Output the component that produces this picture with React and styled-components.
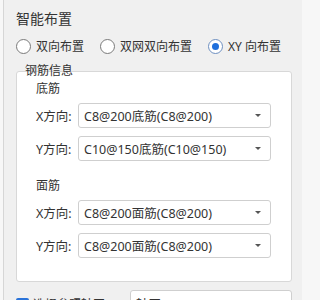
import React from 'react';
import styled, { createGlobalStyle } from 'styled-components';

const Global = createGlobalStyle`
    html, body {
        margin: 0;
        padding: 0;
        background: #f7f7f7;
    }
    body {
        font-family: "Noto Sans", "Noto Sans CJK SC", sans-serif;
        color: #333;
    }
`;

const Page = styled.div`
    width: 302px;
    height: 300px;
    overflow: hidden;
    padding-left: 3px;
    box-sizing: border-box;
`;
const Panel = styled.div`
    height: 100%;
    border-left: 1px solid #d6d6d6;
    background: #f0f0f0;
    padding: 8px 10px 0 12px;
    box-sizing: border-box;
`;
const Title = styled.div`
    font-size: 14px;
    line-height: 20px;
    font-family: "Noto Sans CJK SC", sans-serif;
`;
const RadioRow = styled.div`
    display: flex;
    align-items: center;
    gap: 16px;
    margin-top: 8px;
    height: 20px;
    white-space: nowrap;
`;
const RadioItem = styled.label`
    display: flex;
    align-items: center;
    flex-shrink: 0;
    gap: 5px;
    font-size: 12px;
`;
const Circle = styled.span`
    width: 13px;
    height: 13px;
    flex-shrink: 0;
    border-radius: 50%;
    border: 1px solid ${(props) => props.checked ? '#6d8fc0' : '#7a7a7a'};
    background: #fff;
    display: flex;
    align-items: center;
    justify-content: center;
    &::after {
        content: '';
        width: 7px;
        height: 7px;
        border-radius: 50%;
        background: ${(props) => props.checked ? '#1f6fdc' : 'transparent'};
    }
`;
const Group = styled.div`
    position: relative;
    margin-top: 15px;
    background: #fff;
    border: 1px solid #d8d8d8;
    border-radius: 3px;
    padding: 8px 20px 23px 19px;
    width: 276px;
    box-sizing: border-box;
`;
const Legend = styled.span`
    position: absolute;
    top: -10px;
    left: 8px;
    font-size: 12px;
    line-height: 18px;
`;
const SubTitle = styled.div`
    font-size: 12px;
    line-height: 18px;
    margin-top: ${(props) => props.gap || 0}px;
    margin-bottom: 5px;
`;
const Field = styled.div`
    display: grid;
    grid-template-columns: 42px 193px;
    align-items: center;
    margin-bottom: ${(props) => props.last ? 0 : 8}px;
    white-space: nowrap;
`;
const FieldLabel = styled.span`
    font-size: 12.5px;
`;
const Select = styled.div`
    height: 25px;
    box-sizing: border-box;
    border: 1px solid #cfcfcf;
    border-radius: 3px;
    background: #fff;
    display: flex;
    align-items: center;
    justify-content: space-between;
    padding: 0 9px 0 5px;
    font-size: 12.5px;
`;
const Caret = styled.span`
    width: 0;
    height: 0;
    border-left: 3px solid transparent;
    border-right: 3px solid transparent;
    border-top: 3px solid #555;
`;
const Bottom = styled.div`
    display: flex;
    align-items: flex-start;
    margin-top: 8px;
    white-space: nowrap;
`;
const CheckItem = styled.label`
    display: flex;
    align-items: center;
    gap: 4px;
    width: 114px;
    margin-top: 5px;
    font-size: 12px;
`;
const Check = styled.span`
    width: 13px;
    height: 13px;
    border-radius: 2px;
    background: #2a73d9;
    color: #fff;
    font-size: 10px;
    line-height: 13px;
    text-align: center;
`;
const Input = styled.div`
    width: 162px;
    height: 25px;
    box-sizing: border-box;
    border: 1px solid #cfcfcf;
    border-radius: 3px;
    background: #fff;
    padding: 3px 5px;
    font-size: 12.5px;
`;

const rows = [
    { title: '底筋', x: 'C8@200底筋(C8@200)', y: 'C10@150底筋(C10@150)' },
    { title: '面筋', x: 'C8@200面筋(C8@200)', y: 'C8@200面筋(C8@200)' },
];

const App = () => (
    <Page>
        <Global />
        <Panel>
            <Title>智能布置</Title>
            <RadioRow>
                <RadioItem><Circle />双向布置</RadioItem>
                <RadioItem><Circle />双网双向布置</RadioItem>
                <RadioItem><Circle checked />XY 向布置</RadioItem>
            </RadioRow>
            <Group>
                <Legend>钢筋信息</Legend>
                {rows.map((r, i) => (
                    <div key={r.title}>
                        <SubTitle gap={i ? 16 : 0}>{r.title}</SubTitle>
                        <Field>
                            <FieldLabel>X方向:</FieldLabel>
                            <Select>{r.x}<Caret /></Select>
                        </Field>
                        <Field last>
                            <FieldLabel>Y方向:</FieldLabel>
                            <Select>{r.y}<Caret /></Select>
                        </Field>
                    </div>
                ))}
            </Group>
            <Bottom>
                <CheckItem><Check>✓</Check>选择参照轴网</CheckItem>
                <Input>轴网 1</Input>
            </Bottom>
        </Panel>
    </Page>
);

export default App;
